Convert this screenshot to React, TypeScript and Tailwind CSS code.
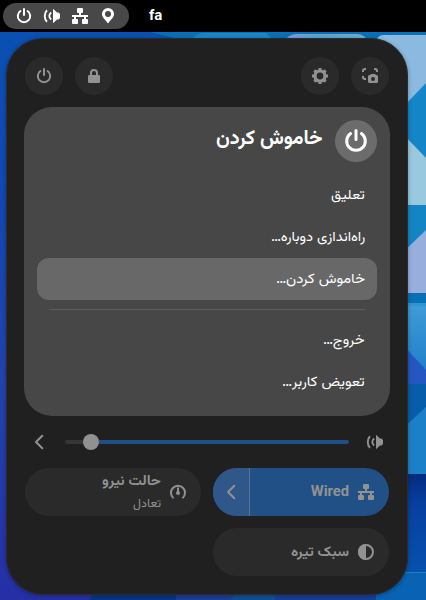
import { useLayoutEffect, useRef, useState, type ReactNode } from "react";

/** Persian label whose run is condensed horizontally to an exact width, anchored at its right edge. */
function Label({ width, className = "", children }: { width: number; className?: string; children: ReactNode }) {
  const ref = useRef<HTMLSpanElement>(null);
  const [scale, setScale] = useState(1);
  useLayoutEffect(() => {
    if (ref.current) setScale(width / ref.current.offsetWidth);
  }, [width]);
  return (
    <span
      ref={ref}
      dir="rtl"
      className={"block w-max shrink-0 origin-right whitespace-nowrap font-['Vazirmatn','DejaVu_Sans',sans-serif] " + className}
      style={{ transform: `scaleX(${scale})` }}
    >
      {children}
    </span>
  );
}

function PowerIcon({ size = 16 }: { size?: number }) {
  return (
    <svg width={size} height={size} viewBox="0 0 16 16" fill="none" stroke="currentColor" strokeWidth="2">
      <path d="M4.4 3A6.2 6.2 0 1 0 11.6 3" strokeLinecap="round" />
      <path d="M8 1v6" strokeLinecap="round" />
    </svg>
  );
}

function SpeakerIcon() {
  return (
    <svg width="18" height="16" viewBox="0 0 18 16" fill="none" stroke="currentColor" strokeWidth="1.9">
      <path d="M10 .8v14.4l4-3.8h1.5L17 10V6l-1.5-1.4H14z" fill="currentColor" stroke="none" />
      <path d="M4 2.3C1 5.2 1 10.8 4 13.7" />
      <path d="M8.2 4.4C5.7 6.2 5.7 9.8 8.2 11.6" />
    </svg>
  );
}

function NetworkIcon() {
  return (
    <svg width="16" height="16" viewBox="0 0 16 16" fill="currentColor">
      <rect x="5" width="6" height="5" rx="1" />
      <path d="M7 5h2v2h7v2h-2v2h-2V9H4v2H2V9H0V7h7z" />
      <rect y="11" width="6" height="5" rx="1" />
      <rect x="10" y="11" width="6" height="5" rx="1" />
    </svg>
  );
}

function PinIcon() {
  return (
    <svg width="16" height="16" viewBox="0 0 16 16" fill="currentColor" fillRule="evenodd">
      <path d="M8 0a6 6 0 0 0-6 6c0 3.3 3 5.5 6 9.4 3-3.9 6-6.1 6-9.4a6 6 0 0 0-6-6zm0 3a3 3 0 1 1 0 6 3 3 0 0 1 0-6z" />
    </svg>
  );
}

function LockIcon() {
  return (
    <svg width="16" height="16" viewBox="0 0 16 16">
      <path d="M5 8V5a3 3 0 0 1 6 0v3" fill="none" stroke="currentColor" strokeWidth="2" />
      <rect x="2" y="7" width="12" height="8" rx="1.3" fill="currentColor" />
    </svg>
  );
}

function GearIcon() {
  return (
    <svg width="16" height="16" viewBox="0 0 16 16" fill="none" stroke="currentColor">
      <circle cx="8" cy="8" r="5" strokeWidth="3.2" />
      <path
        d="M8 0v3M8 13v3M0 8h3M13 8h3M2.4 2.4l2 2M11.6 11.6l2 2M2.4 13.6l2-2M11.6 4.4l2-2"
        strokeWidth="3"
      />
    </svg>
  );
}

function ScreenshotIcon() {
  return (
    <svg width="16" height="16" viewBox="0 0 16 16">
      <path
        d="M1 4V3a2 2 0 0 1 2-2h1M12 1h1a2 2 0 0 1 2 2v1M1 8v1a2 2 0 0 0 2 2h1"
        fill="none"
        stroke="currentColor"
        strokeWidth="2"
      />
      <path
        fill="currentColor"
        fillRule="evenodd"
        d="M8.8 6h4.4l.6 1h.6A1.6 1.6 0 0 1 16 8.6v4.8a1.6 1.6 0 0 1-1.6 1.6H7.6A1.6 1.6 0 0 1 6 13.4V8.6A1.6 1.6 0 0 1 7.6 7h.6zM11 9a2 2 0 1 0 0 4 2 2 0 0 0 0-4z"
      />
    </svg>
  );
}

function GaugeIcon() {
  return (
    <svg width="16" height="16" viewBox="0 0 16 16" fill="none" stroke="currentColor" strokeWidth="2">
      <path d="M3.6 14.2A7 7 0 1 1 12.4 14.2" />
      <path d="M8 3.5v5" strokeWidth="2" />
      <circle cx="8" cy="9" r="2" fill="currentColor" stroke="none" />
    </svg>
  );
}

function ContrastIcon() {
  return (
    <svg width="16" height="16" viewBox="0 0 16 16">
      <circle cx="8" cy="8" r="7" fill="none" stroke="currentColor" strokeWidth="2" />
      <path d="M8 0a8 8 0 0 0 0 16z" fill="currentColor" />
    </svg>
  );
}

function ChevronIcon() {
  return (
    <svg width="16" height="16" viewBox="0 0 16 16" fill="none" stroke="currentColor" strokeWidth="2">
      <path d="M11.3 1.8 5 8l6.3 6.2" strokeLinecap="round" strokeLinejoin="round" />
    </svg>
  );
}

function Wallpaper() {
  return (
    <svg className="absolute inset-0" width="426" height="600" viewBox="0 0 426 600">
      <defs>
        <linearGradient id="left" x1="0" y1="0" x2="0" y2="1">
          <stop offset="0" stopColor="#0752b2" />
          <stop offset=".3" stopColor="#1249b2" />
          <stop offset=".65" stopColor="#2442ae" />
          <stop offset="1" stopColor="#262fa5" />
        </linearGradient>
        <linearGradient id="blue" x1="0" y1="0" x2="0" y2="1">
          <stop offset="0" stopColor="#429bd8" />
          <stop offset="1" stopColor="#1e7fca" />
        </linearGradient>
        <linearGradient id="deep" x1="0" y1="0" x2="0" y2="1">
          <stop offset="0" stopColor="#042b80" />
          <stop offset=".3" stopColor="#073f9f" />
          <stop offset="1" stopColor="#0751ae" />
        </linearGradient>
        <linearGradient id="strip" x1="0" y1="0" x2="1" y2="0">
          <stop offset="0" stopColor="#7f9bdc" />
          <stop offset=".4" stopColor="#5aa4d0" />
          <stop offset="1" stopColor="#6eafd0" />
        </linearGradient>
      </defs>
      <rect width="426" height="600" fill="url(#left)" />
      <path d="M150 32h276v10H190z" fill="#0870b8" />
      <path d="M190 42q5-9 15-9h61l9 9z" fill="#1886cb" />
      <path d="M284 42q4-8 13-8h60q8 0 11 8z" fill="url(#strip)" />
      <path d="M390 40h36v562h-36z" fill="#1787c9" />
      <path d="M376 44q0-9 8-9h42v48l-24 25h-26z" fill="#8bb9df" />
      <path d="M402 107h5l19-20v70l-24-24z" fill="#1485c7" />
      <path d="M400 131l26 27v47h-26z" fill="#98c9de" />
      <path d="M400 205h26v27l-26 23z" fill="#1485c4" />
      <path d="M400 255l26-25v63h-26z" fill="#98aedd" />
      <path d="M400 293h26v10h-26z" fill="#0870b5" />
      <path d="M400 303h26v70l-26-27z" fill="url(#blue)" />
      <path d="M400 303h26v3h-26z" fill="#3194d2" />
      <path d="M400 342l26 28v14h-26z" fill="#2457c2" />
      <path d="M400 384h26v25l-26 23z" fill="#075da9" />
      <path d="M400 431l26-24v67h-26z" fill="#1c80c9" />
      <path d="M400 474h26v98h-26z" fill="url(#deep)" />
      <path d="M376 572h50v28h-50z" fill="#0962b3" />
      <path d="M400 572h26v1h-26z" fill="#1b82ca" />
      <path d="M100 580h76v20H90z" fill="#063687" />
      <path d="M176 580h101v20H176z" fill="#1b3e98" />
      <path d="M230 600l16-20h32l-3 20z" fill="#105092" />
      <path d="M276 580h100v20H276z" fill="#173e98" />
    </svg>
  );
}

function RoundButton({ children }: { children: ReactNode }) {
  return (
    <button className="flex size-[38px] items-center justify-center rounded-full bg-[#2a2a2a] text-[#929292]">
      {children}
    </button>
  );
}

function MenuItem({ width, selected, children }: { width: number; selected?: boolean; children: ReactNode }) {
  return (
    <li className={"flex h-[42px] items-center justify-end rounded-xl pt-0.5 pr-3 " + (selected ? "bg-[#686868]" : "")}>
      <Label width={width} className="text-[14px] leading-5 text-white">
        {children}
      </Label>
    </li>
  );
}

export default function App() {
  return (
    <div className="relative flex h-[600px] w-[426px] flex-col overflow-hidden bg-[#124db3]">
      <Wallpaper />
      <header className="relative flex h-8 shrink-0 items-center bg-black pl-[3px] text-white">
        <div className="flex h-[26px] w-[126px] items-center gap-3 rounded-full bg-[#484848] pl-[13px]">
          <PowerIcon />
          <div className="-mx-px">
            <SpeakerIcon />
          </div>
          <NetworkIcon />
          <PinIcon />
        </div>
        <span className="ml-5 pb-[3px] font-[Roboto,sans-serif] text-[15px] leading-5 font-bold">fa</span>
      </header>

      <main className="relative mt-1.5 ml-1.5 flex h-[557px] w-[402px] flex-col rounded-[37px] border border-[#2b2b2b] bg-[#202020] px-[17px] pt-[18px] text-[#929292] shadow-[0_1px_4px_rgba(0,0,0,0.3)]">
        <div className="flex h-[38px] justify-between px-px">
          <div className="flex gap-3">
            <RoundButton><PowerIcon /></RoundButton>
            <RoundButton><LockIcon /></RoundButton>
          </div>
          <div className="flex gap-3">
            <RoundButton><GearIcon /></RoundButton>
            <RoundButton><ScreenshotIcon /></RoundButton>
          </div>
        </div>

        <section className="mt-3 h-[309px] rounded-[28px] bg-[#474747] p-[13px]">
          <div className="flex h-[42px] items-start justify-end gap-[13px] text-white">
            <Label width={106} className="mt-[5px] text-[20px] leading-7 font-bold">خاموش کردن</Label>
            <div className="flex size-[42px] items-center justify-center rounded-full bg-[#6c6c6c]">
              <PowerIcon size={24} />
            </div>
          </div>
          <ul className="mt-3">
            <MenuItem width={34}>تعلیق</MenuItem>
            <MenuItem width={94}>راه‌اندازی دوباره…</MenuItem>
            <MenuItem width={89} selected>خاموش کردن…</MenuItem>
            <li className="mx-3 mt-[9px] mb-[9px] h-px bg-[#5b5b5b]" />
            <MenuItem width={42}>خروج…</MenuItem>
            <MenuItem width={83}>تعویض کاربر…</MenuItem>
          </ul>
        </section>

        <div className="mt-[18px] flex h-4 items-center">
          <div className="ml-[7px]"><ChevronIcon /></div>
          <div className="ml-[18px] flex w-[284px] items-center">
            <div className="h-1 w-[18px] rounded-l-full bg-[#363636]" />
            <div className="size-4 rounded-full bg-[#919191]" />
            <div className="h-1 flex-1 rounded-r-full bg-[#234f87]" />
          </div>
          <div className="ml-[17px]"><SpeakerIcon /></div>
        </div>

        <div className="mt-[18px] grid grid-cols-2 gap-3 px-px">
          <div className="flex h-12 items-center justify-end gap-[9px] rounded-full bg-[#2a2a2a] pr-[15px]">
            <div className="flex flex-col items-end pt-0.5">
              <Label width={59} className="text-[14px] leading-5 font-bold">حالت نیرو</Label>
              <Label width={28} className="mt-0.5 text-[12px] leading-5">تعادل</Label>
            </div>
            <GaugeIcon />
          </div>
          <div className="flex h-12 overflow-hidden rounded-full bg-[#215087]">
            <div className="flex w-[37px] items-center justify-center border-r border-[#557597] bg-[#30578a]">
              <ChevronIcon />
            </div>
            <div className="flex flex-1 items-center justify-end gap-[9px] pr-[15px]">
              <span className="origin-right scale-x-[0.98] pb-0.5 font-[Roboto,sans-serif] text-[15px] leading-5 font-bold">Wired</span>
              <NetworkIcon />
            </div>
          </div>
          <div className="col-start-2 flex h-12 items-center justify-end gap-[9px] rounded-full bg-[#2a2a2a] pr-[15px]">
            <Label width={58} className="mt-0.5 text-[14px] leading-5 font-bold">سبک تیره</Label>
            <ContrastIcon />
          </div>
        </div>
      </main>
    </div>
  );
}
